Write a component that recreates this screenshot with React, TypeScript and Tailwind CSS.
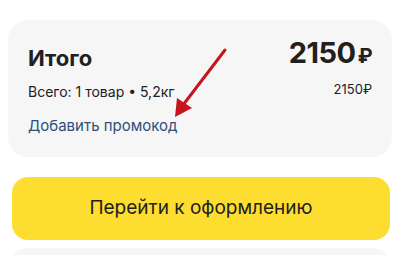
export default function App() {
  return (
    <div className="w-[400px] h-[255px] overflow-hidden bg-white text-[#21201f]" style={{ fontFamily: 'Inter, "Noto Sans", sans-serif' }}>
      <div className="relative mx-2 mt-5 h-[137px] rounded-[20px] bg-[#f6f6f6] px-5 pt-[18px]">
        <div className="flex items-start justify-between">
          <span className="mt-[9px] text-[22px] font-bold leading-none">Итого</span>
          <span className="text-[29px] font-bold leading-none tracking-[-0.5px]">
            2150<span className="ml-[2px] text-[20px]">₽</span>
          </span>
        </div>
        <div className="mt-[14px] flex items-start justify-between">
          <span className="mt-[2px] text-[14px] leading-none">Всего: 1 товар • 5,2кг</span>
          <span className="text-[13px] leading-none">2150₽</span>
        </div>
        <div className="mt-[19px] text-[15px] leading-none text-[#2e4e7a]">Добавить промокод</div>
        <svg className="absolute left-0 top-0" width="385" height="137" viewBox="0 0 385 137">
          <line x1="217" y1="30" x2="172" y2="89" stroke="#c4161c" strokeWidth="3" strokeLinecap="round" />
          <polygon points="167,97 169,78 184,88" fill="#c4161c" />
        </svg>
      </div>
      <button className="ml-3 mt-5 flex h-[63px] w-[378px] items-center justify-center rounded-[16px] bg-[#fcdd30] text-[19px] text-[#21201f]">
        Перейти к оформлению
      </button>
      <div className="mx-2 mt-2 h-[40px] rounded-[20px] bg-[#f6f6f6]" />
    </div>
  );
}
